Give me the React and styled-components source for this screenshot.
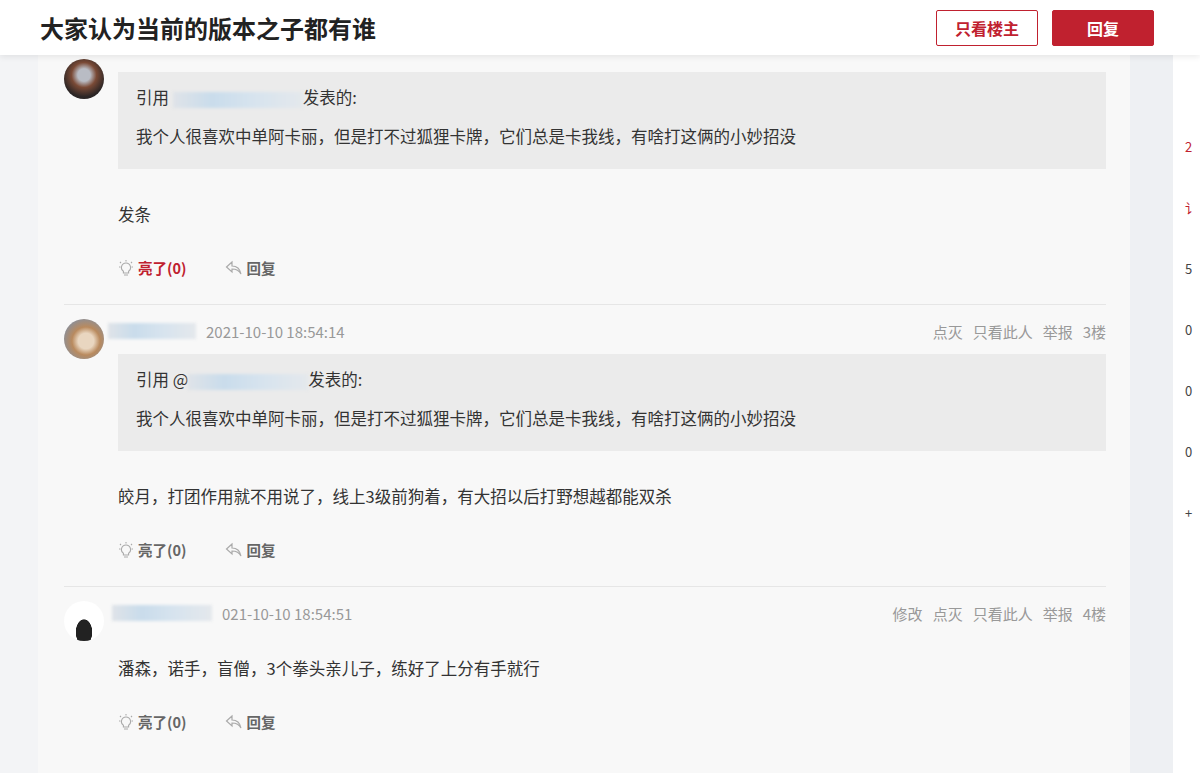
import React from 'react'
import styled, { createGlobalStyle } from 'styled-components'

const Global = createGlobalStyle`
  body { margin: 0; background: #eef0f3; font-family: "Microsoft YaHei", "Noto Sans CJK SC", "Noto Sans", sans-serif; }
`

const Page = styled.div`
  width: 1200px;
  height: 773px;
  overflow: hidden;
  position: relative;
  display: flex;
  flex-direction: column;
`

const Header = styled.div`
  height: 55px;
  flex-shrink: 0;
  background: #fff;
  box-shadow: 0 2px 6px rgba(0,0,0,0.08);
  display: flex;
  align-items: center;
  padding: 0 46px 0 40px;
  position: relative;
  z-index: 2;
`

const Title = styled.h1`
  flex: 1;
  margin: 0;
  font-size: 24px;
  font-weight: 700;
  color: #222;
`

const Btn = styled.button`
  width: 102px;
  height: 36px;
  margin-left: 14px;
  border-radius: 2px;
  font-family: inherit;
  font-size: 16px;
  font-weight: 700;
  border: 1px solid #c0212f;
  color: ${p => (p.$solid ? '#fff' : '#c0212f')};
  background: ${p => (p.$solid ? '#c0212f' : '#fff')};
`

const Body = styled.div`
  flex: 1;
  display: flex;
  margin-top: -18px;
`

const LeftGutter = styled.div`
  width: 38px;
  background: #f3f4f6;
`

const Card = styled.div`
  width: 1092px;
  background: #f8f8f8;
  padding: 0 24px 0 26px;
  box-sizing: border-box;
`

const Gap = styled.div`
  width: 43px;
  background: #eef0f3;
`

const Side = styled.div`
  flex: 1;
  background: #fff;
  display: flex;
  flex-direction: column;
  padding-top: 100px;
  gap: 42px;
  font-size: 13px;
  color: #444;
  overflow: hidden;
  padding-left: 12px;
`

const SideChar = styled.span`
  color: ${p => (p.$red ? '#c0212f' : '#444')};
`

const Post = styled.div`
  display: flex;
  border-bottom: ${p => (p.$last ? 'none' : '1px solid #e6e6e6')};
  padding: ${p => p.$top}px 0 0;
`

const Avatar = styled.div`
  width: 40px;
  height: 40px;
  border-radius: 50%;
  margin-right: 14px;
  flex-shrink: 0;
  background: ${p => p.$bg};
`

const Main = styled.div`
  flex: 1;
`

const Meta = styled.div`
  display: flex;
  align-items: center;
  height: 24px;
  font-size: 15px;
  color: #999;
`

const Blur = styled.span`
  display: inline-block;
  width: ${p => p.$w}px;
  height: 16px;
  margin-left: ${p => p.$ml || 0}px;
  margin-right: 10px;
  background: linear-gradient(90deg, #dfe3e8, #c9dceb 30%, #d6e3ee 60%, #e4e8ec);
  filter: blur(1.5px);
  vertical-align: middle;
`

const Time = styled.span`
  flex: 1;
`

const MetaLink = styled.span`
  margin-left: 10px;
`

const Quote = styled.div`
  background: #ebebeb;
  padding: 12px 18px 20px;
  margin-top: ${p => p.$mt}px;
  font-size: 16.5px;
  color: #333;
  line-height: 26px;
  p { margin: 0 0 13px; }
  p:last-child { margin: 0; }
`

const Text = styled.div`
  font-size: 16.5px;
  color: #333;
  margin-top: ${p => p.$mt}px;
  line-height: 26px;
`

const Actions = styled.div`
  display: flex;
  align-items: center;
  gap: 38px;
  margin: ${p => p.$mt}px 0 26px;
  font-size: 14.5px;
  font-weight: 700;
  color: #666;
`

const Act = styled.span`
  display: flex;
  align-items: center;
  gap: 4px;
  color: ${p => (p.$red ? '#c0212f' : '#666')};
`

const Bulb = () => (
  <svg width="16" height="18" viewBox="0 0 16 18" fill="none" stroke="#aaa" strokeWidth="1.1">
    <path d="M8 4a4.5 4.5 0 0 0-2.6 8.2V14h5.2v-1.8A4.5 4.5 0 0 0 8 4z" />
    <path d="M6 16h4M8 1v1.5M2 3l1 1M14 3l-1 1M1 8h1.5M15 8h-1.5" />
  </svg>
)

const ReplyIcon = () => (
  <svg width="18" height="16" viewBox="0 0 18 16" fill="none" stroke="#aaa" strokeWidth="1.2">
    <path d="M7 2L1.5 7 7 12V9c4 0 7 1 9 5-1-5-4-8-9-8V2z" />
  </svg>
)

const Row = ({ red }) => (
  <>
    <Act $red={red}><Bulb />亮了(0)</Act>
    <Act><ReplyIcon />回复</Act>
  </>
)

const quoteText = '我个人很喜欢中单阿卡丽，但是打不过狐狸卡牌，它们总是卡我线，有啥打这俩的小妙招没'

export default function App() {
  return (
    <Page>
      <Global />
      <Header>
        <Title>大家认为当前的版本之子都有谁</Title>
        <Btn>只看楼主</Btn>
        <Btn $solid>回复</Btn>
      </Header>
      <Body>
        <LeftGutter />
        <Card>
          <Post $top={0}>
            <Avatar $bg="radial-gradient(circle at 50% 40%, #b9bcc4 0 20%, #7a4a36 40%, #2b2525 70%)" style={{ marginTop: 22 }} />
            <Main>
              <Quote $mt={35}>
                <p>引用 <Blur $w={130} style={{ marginRight: 0 }} />发表的:</p>
                <p>{quoteText}</p>
              </Quote>
              <Text $mt={32}>发条</Text>
              <Actions $mt={30}><Row red /></Actions>
            </Main>
          </Post>
          <Post $top={14}>
            <Avatar $bg="radial-gradient(circle at 55% 55%, #e9d6c0 0 25%, #b98a5e 45%, #8d8f96 75%)" />
            <Main>
              <Meta>
                <Blur $w={88} $ml={-10} />
                <Time>2021-10-10 18:54:14</Time>
                <MetaLink>点灭</MetaLink>
                <MetaLink>只看此人</MetaLink>
                <MetaLink>举报</MetaLink>
                <MetaLink>3楼</MetaLink>
              </Meta>
              <Quote $mt={11}>
                <p>引用 @<Blur $w={120} style={{ marginRight: 0 }} />发表的:</p>
                <p>{quoteText}</p>
              </Quote>
              <Text $mt={32}>皎月，打团作用就不用说了，线上3级前狗着，有大招以后打野想越都能双杀</Text>
              <Actions $mt={30}><Row /></Actions>
            </Main>
          </Post>
          <Post $top={14} $last>
            <Avatar $bg="radial-gradient(ellipse at 50% 78%, #222 0 28%, #fff 30%)" />
            <Main>
              <Meta>
                <Blur $w={100} $ml={-6} />
                <Time>021-10-10 18:54:51</Time>
                <MetaLink>修改</MetaLink>
                <MetaLink>点灭</MetaLink>
                <MetaLink>只看此人</MetaLink>
                <MetaLink>举报</MetaLink>
                <MetaLink>4楼</MetaLink>
              </Meta>
              <Text $mt={30}>潘森，诺手，盲僧，3个拳头亲儿子，练好了上分有手就行</Text>
              <Actions $mt={30}><Row /></Actions>
            </Main>
          </Post>
        </Card>
        <Gap />
        <Side>
          <SideChar $red>2</SideChar>
          <SideChar $red>讠</SideChar>
          <SideChar>5</SideChar>
          <SideChar>0</SideChar>
          <SideChar>0</SideChar>
          <SideChar>0</SideChar>
          <SideChar>+</SideChar>
        </Side>
      </Body>
    </Page>
  )
}
